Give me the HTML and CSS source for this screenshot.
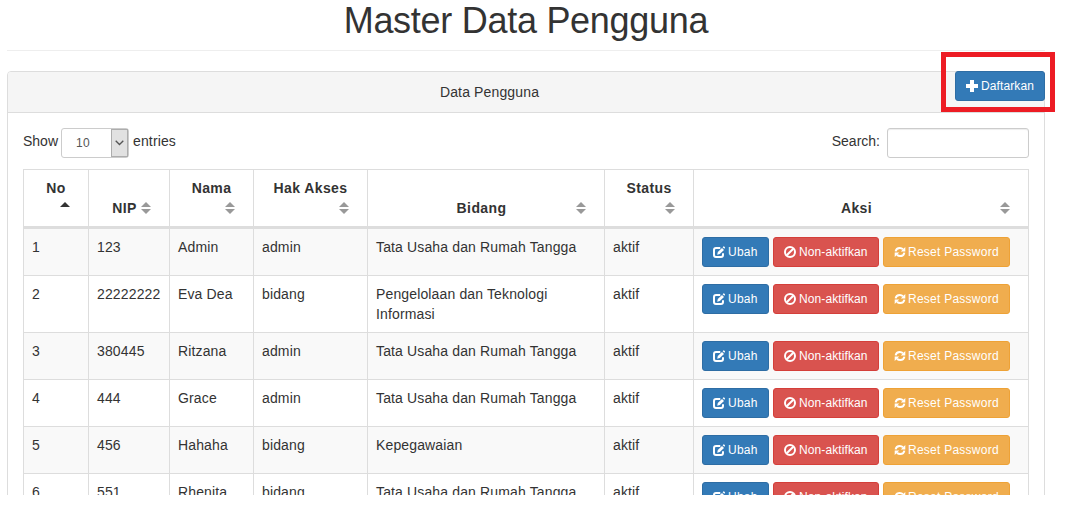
FILE: index.html
```html
<!DOCTYPE html>
<html lang="id">
<head>
<meta charset="utf-8">
<title>Master Data Pengguna</title>
<link rel="stylesheet" href="styles.css">
</head>
<body>
<svg class="defs" width="0" height="0" aria-hidden="true">
  <symbol id="plus" viewBox="0 0 12 12"><path d="M4 0h4v4h4v4H8v4H4V8H0V4h4z" fill="#fff"/></symbol>
  <symbol id="edit" viewBox="0 0 12 12"><path d="M7.3 2H3Q1 2 1 4v5q0 2 2 2h5q2 0 2-2V7.2" fill="none" stroke="#fff" stroke-width="2"/><path d="M4.2 8.7l.6-2.6L9 1.9l2 2L6.8 8.1zM9.6 1.3L10.4.5q.4-.3.8 0l.7.8q.3.4 0 .8l-.6.7z" fill="#fff"/></symbol>
  <symbol id="ban" viewBox="0 0 12 12"><circle cx="6" cy="6" r="5" fill="none" stroke="#fff" stroke-width="2"/><path d="M2.7 9.3l6.6-6.6" stroke="#fff" stroke-width="2"/></symbol>
  <symbol id="refresh" viewBox="0 0 12 12"><path d="M1.6 5.3C2 3 3.8 1.9 5.8 1.9c1.4 0 2.4.5 3.2 1.3M10.4 6.7C10 9 8.2 10.1 6.2 10.1c-1.4 0-2.4-.5-3.2-1.3" fill="none" stroke="#fff" stroke-width="2"/><path d="M11.3.9v4.5H6.8zM.7 11.1V6.6h4.5z" fill="#fff"/></symbol>
</svg>
<main class="page">
  <h1 class="title">Master Data Pengguna</h1>
  <section class="panel">
    <header class="panel-heading"><span>Data Pengguna</span></header>
    <button class="btn btn-primary btn-add"><svg class="icon"><use href="#plus"/></svg><span>Daftarkan</span></button>
    <div class="marker"></div>
    <div class="panel-body">
      <div class="toolbar">
        <div class="length"><span class="show">Show</span><div class="select"><span class="value">10</span><span class="arrow"><svg width="9" height="6" viewBox="0 0 9 6"><path d="M.7.7l3.8 3.8L8.3.7" fill="none" stroke="#555" stroke-width="1.3"/></svg></span></div><span class="entries">entries</span></div>
        <label class="search"><span>Search:</span><input type="text" class="input"></label>
      </div>
      <table class="table">
        <colgroup><col class="c-no"><col class="c-nip"><col class="c-nama"><col class="c-hak"><col class="c-bidang"><col class="c-status"><col class="c-aksi"></colgroup>
        <thead>
          <tr>
            <th class="two">No<i class="sort asc"></i></th>
            <th class="one">NIP<i class="sort"></i></th>
            <th class="two">Nama<i class="sort"></i></th>
            <th class="two">Hak Akses<i class="sort"></i></th>
            <th class="one">Bidang<i class="sort"></i></th>
            <th class="two">Status<i class="sort"></i></th>
            <th class="one">Aksi<i class="sort"></i></th>
          </tr>
        </thead>
        <tbody id="rows"></tbody>
      </table>
    </div>
  </section>
</main>
<script src="script.js"></script>
</body>
</html>
```

FILE: styles.css
```css
* { box-sizing: border-box; }
body {
  margin: 0;
  background: #fff;
  color: #333;
  font: 14px/20px "Liberation Sans", Arial, sans-serif;
  letter-spacing: 0.14px;
}
.defs { position: absolute; }
.page { height: 495px; padding: 0 24px 0 7px; overflow: hidden; }
.title {
  width: 1038px;
  height: 51px;
  margin: 0 0 20px;
  padding-top: 1px;
  border-bottom: 1px solid #eee;
  font-size: 36px;
  line-height: 40px;
  font-weight: 400;
  letter-spacing: -0.28px;
  text-align: center;
}
.panel {
  position: relative;
  width: 1038px;
  height: 600px;
  border: 1px solid #ddd;
  border-radius: 4px;
}
.panel-heading {
  height: 41px;
  padding: 10px 73px 10px 0;
  background: #f5f5f5;
  border-bottom: 1px solid #ddd;
  border-radius: 3px 3px 0 0;
  text-align: center;
}
.btn {
  display: inline-flex;
  align-items: center;
  height: 30px;
  padding: 0 0 0 10px;
  gap: 3px;
  border: 1px solid;
  border-radius: 3px;
  color: #fff;
  font: 12px/18px "Liberation Sans", Arial, sans-serif;
  letter-spacing: 0.1px;
  white-space: nowrap;
}
.icon { width: 12px; height: 12px; flex: none; }
.btn-primary { background: #337ab7; border-color: #2e6da4; }
.btn-danger { background: #d9534f; border-color: #d43f3a; }
.btn-warning { background: #f0ad4e; border-color: #eea236; }
.btn-add { position: absolute; top: -1px; right: -1px; width: 90px; }
.marker {
  position: absolute;
  top: -20px;
  right: -11px;
  width: 114px;
  height: 60px;
  border: 5px solid #ed1c24;
}
.panel-body { padding: 15px; }
.toolbar { display: flex; justify-content: space-between; height: 41px; }
.length, .search { display: flex; height: 30px; }
.show { width: 38px; padding-top: 3px; letter-spacing: 0; }
.entries { padding: 3px 0 0 4px; }
.select {
  display: flex;
  justify-content: space-between;
  width: 68px;
  height: 30px;
  border: 1px solid #ccc;
  border-radius: 3px;
  color: #555;
  font-size: 12px;
}
.value { padding: 4px 0 0 14px; letter-spacing: 0.4px; }
.arrow {
  display: grid;
  place-items: center;
  width: 17px;
  background: #e1e1e1;
  border: 1px solid #adadad;
}
.search span { padding: 3px 7px 0 0; letter-spacing: 0; }
.input {
  width: 142px;
  height: 30px;
  border: 1px solid #ccc;
  border-radius: 3px;
  box-shadow: inset 0 1px 1px rgba(0, 0, 0, .075);
}
.table {
  width: 1006px;
  table-layout: fixed;
  border-collapse: separate;
  border-spacing: 0;
  border: solid #ddd;
  border-width: 1px 0 0 1px;
}
.c-no { width: 65px; }
.c-nip { width: 81px; }
.c-nama { width: 84px; }
.c-hak { width: 114px; }
.c-bidang { width: 237px; }
.c-status { width: 89px; }
.c-aksi { width: 335px; }
th {
  position: relative;
  height: 59px;
  padding: 8px 0;
  border: solid #ddd;
  border-width: 0 1px 3px 0;
  vertical-align: bottom;
  letter-spacing: 0.4px;
}
.two { padding-bottom: 28px; }
.one { padding-right: 9px; }
.sort { position: absolute; right: 18px; bottom: 12px; width: 10px; height: 12px; }
.sort::before, .sort::after {
  content: "";
  position: absolute;
  left: 0;
  border: solid transparent;
  border-width: 0 5px;
}
.sort::before { top: 0; border-bottom: 5px solid #999; }
.sort::after { top: 7px; border-top: 5px solid #999; }
.asc::before { border-bottom-color: #333; }
.asc::after { display: none; }
td {
  height: 47px;
  padding: 8px;
  border: solid #ddd;
  border-width: 0 1px 1px 0;
  vertical-align: top;
}
tbody tr:nth-child(odd) { background: #f9f9f9; }
.actions { display: flex; gap: 4px; }
.actions .btn-primary { width: 67px; letter-spacing: 0.25px; }
.actions .btn-danger { width: 106px; }
.actions .btn-warning { width: 127px; gap: 2px; letter-spacing: 0.25px; }
```

FILE: script.js
```js
const users = [
  ["123", "Admin", "admin", "Tata Usaha dan Rumah Tangga"],
  ["22222222", "Eva Dea", "bidang", "Pengelolaan dan Teknologi Informasi"],
  ["380445", "Ritzana", "admin", "Tata Usaha dan Rumah Tangga"],
  ["444", "Grace", "admin", "Tata Usaha dan Rumah Tangga"],
  ["456", "Hahaha", "bidang", "Kepegawaian"],
  ["551", "Rhenita", "bidang", "Tata Usaha dan Rumah Tangga"]
];

const button = (kind, icon, label) =>
  `<button class="btn btn-${kind}"><svg class="icon"><use href="#${icon}"/></svg><span>${label}</span></button>`;

const actions = `<div class="actions">${
  button("primary", "edit", "Ubah") +
  button("danger", "ban", "Non-aktifkan") +
  button("warning", "refresh", "Reset Password")
}</div>`;

document.getElementById("rows").innerHTML = users
  .map((user, i) => `<tr>${[i + 1, ...user, "aktif", actions].map(v => `<td>${v}</td>`).join("")}</tr>`)
  .join("");
```
